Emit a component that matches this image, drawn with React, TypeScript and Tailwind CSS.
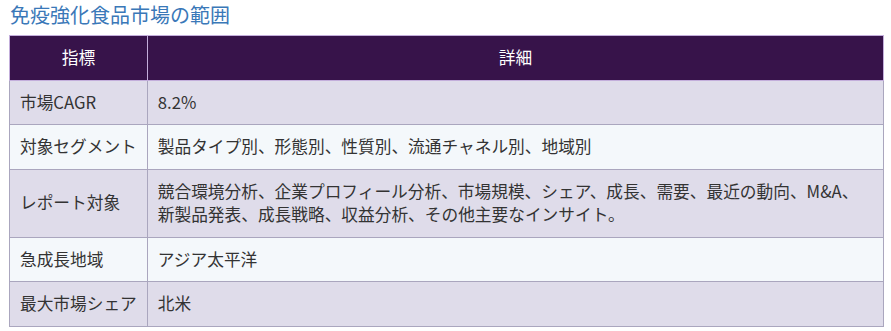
const rows: { label: string; detail: string }[] = [
  { label: "市場CAGR", detail: "8.2%" },
  { label: "対象セグメント", detail: "製品タイプ別、形態別、性質別、流通チャネル別、地域別" },
  {
    label: "レポート対象",
    detail:
      "競合環境分析、企業プロフィール分析、市場規模、シェア、成長、需要、最近の動向、M&A、新製品発表、成長戦略、収益分析、その他主要なインサイト。",
  },
  { label: "急成長地域", detail: "アジア太平洋" },
  { label: "最大市場シェア", detail: "北米" },
];

export default function App() {
  return (
    <div
      className="w-[891px] h-[331px] bg-white pl-[9px] pt-[2px]"
      style={{ fontFamily: '"Noto Sans CJK JP", "Noto Sans", sans-serif' }}
    >
      <h2 className="text-[20px] leading-[26px] text-[#3a78b8] pl-px">免疫強化食品市場の範囲</h2>
      <table className="mt-[7px] w-[875px] border-collapse text-[16.7px] leading-[23.5px] text-[#333]">
        <thead>
          <tr className="bg-[#37134a] text-white">
            <th className="w-[137px] border border-[#c3aedb] py-[10px] font-normal">指標</th>
            <th className="border border-[#c3aedb] py-[10px] font-normal">詳細</th>
          </tr>
        </thead>
        <tbody>
          {rows.map((r, i) => (
            <tr key={r.label} className={i % 2 === 0 ? "bg-[#dfdcea]" : "bg-[#f4f8fb]"}>
              <td className="border border-[#aaa6be] px-[10px] py-[10px] whitespace-nowrap">{r.label}</td>
              <td className="border border-[#aaa6be] px-[10px] py-[10px]">{r.detail}</td>
            </tr>
          ))}
        </tbody>
      </table>
    </div>
  );
}
